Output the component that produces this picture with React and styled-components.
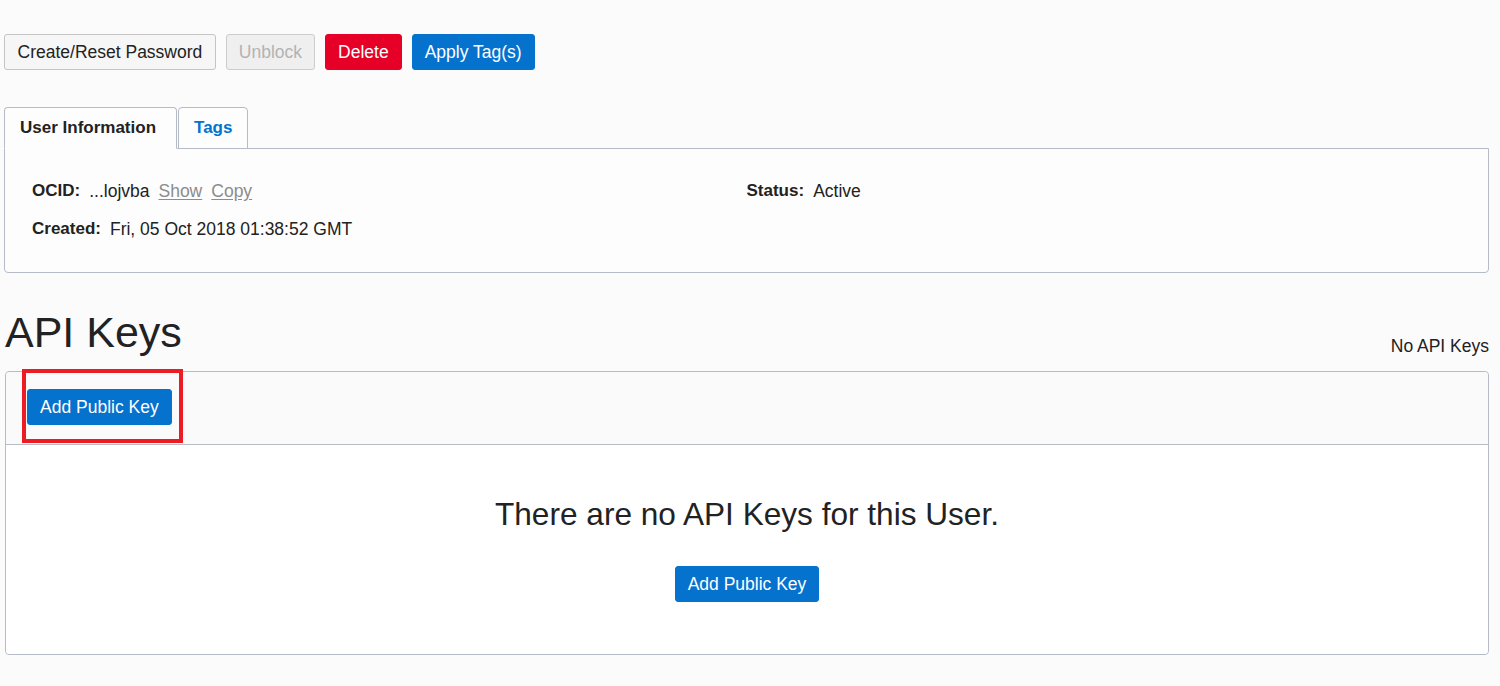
import React from "react";
import styled, { createGlobalStyle } from "styled-components";

const Global = createGlobalStyle`
  html, body { margin: 0; padding: 0; background: #fcfbfc; }
  body { font-family: "Liberation Sans", Arial, sans-serif; color: #222; }
  * { box-sizing: border-box; }
`;

const Page = styled.div`
  padding: 34px 11px 32px 4px;
  min-height: 686px;
`;

const Toolbar = styled.div`
  display: flex;
  gap: 10px;
`;

const variants = {
  default: { bg: "#f6f6f6", fg: "#222", border: "#c4c4c4", pad: "12.5px" },
  disabled: { bg: "#efefef", fg: "#b3b3b3", border: "#cdcdcd", pad: "12px" },
  danger: { bg: "#e60027", fg: "#fff", border: "#e60027", pad: "12px" },
  primary: { bg: "#0572ce", fg: "#fff", border: "#0572ce", pad: "12px" },
};

const Button = styled.button`
  height: 36px;
  padding: 0 ${(p) => variants[p.$variant || "default"].pad};
  font-family: "Liberation Sans", Arial, sans-serif;
  font-size: 17.5px;
  border-radius: 3px;
  border: 1px solid ${(p) => variants[p.$variant || "default"].border};
  background: ${(p) => variants[p.$variant || "default"].bg};
  color: ${(p) => variants[p.$variant || "default"].fg};
  cursor: ${(p) => (p.$variant === "disabled" ? "default" : "pointer")};
  white-space: nowrap;
`;

const Tabs = styled.div`
  display: flex;
  gap: 1px;
  margin-top: 37px;
  position: relative;
  z-index: 1;
`;

const Tab = styled.div`
  height: 42px;
  margin-bottom: -1px;
  padding: ${(p) => (p.$active ? "0 20px 0 15px" : "0 15px")};
  display: flex;
  align-items: center;
  font-size: 17px;
  font-weight: bold;
  color: ${(p) => (p.$active ? "#222" : "#0572ce")};
  background: #fdfdfd;
  border: 1px solid #b6bcc6;
  border-bottom-color: ${(p) => (p.$active ? "#fdfdfd" : "#b6bcc6")};
  border-radius: 4px 4px 0 0;
`;

const InfoPanel = styled.div`
  border: 1px solid #b6bcc6;
  border-radius: 0 0 4px 4px;
  background: #fdfdfd;
  padding: 31px 27px 32px;
  display: grid;
  grid-template-columns: 1fr 1fr;
  row-gap: 16px;
`;

const Field = styled.div`
  display: flex;
  align-items: center;
  gap: 9px;
  font-size: 17.5px;
  line-height: 22px;
  grid-column: ${(p) => p.$col || "auto"};
  grid-row: ${(p) => p.$row || "auto"};
`;

const Label = styled.span`
  font-weight: bold;
  font-size: 17px;
`;

const LinkText = styled.a`
  color: #8c8c8c;
  text-decoration: underline;
  text-underline-offset: 2px;
  cursor: pointer;
`;

const TitleRow = styled.div`
  display: flex;
  justify-content: space-between;
  align-items: flex-end;
  margin-top: 33px;
  padding-left: 1px;
`;

const Heading = styled.h1`
  margin: 0;
  font-size: 43px;
  font-weight: normal;
  line-height: 52px;
  color: #222;
`;

const Count = styled.div`
  font-size: 17.5px;
  line-height: 22px;
  margin-bottom: 1px;
`;

const Card = styled.div`
  margin-top: 13px;
  margin-left: 1px;
  border: 1px solid #b6bcc6;
  border-radius: 4px;
`;

const CardHeader = styled.div`
  background: #fbfafb;
  padding: 17px 21px 19px;
  border-bottom: 1px solid #b6bcc6;
  border-radius: 4px 4px 0 0;
  display: flex;
`;

const Highlight = styled.div`
  position: relative;
  display: inline-flex;
`;

const HighlightBox = styled.div`
  position: absolute;
  top: -20px;
  left: -5px;
  right: -11px;
  bottom: -18px;
  border: 4px solid #ec1c24;
  pointer-events: none;
`;

const CardBody = styled.div`
  background: #fff;
  border-radius: 0 0 4px 4px;
  padding: 51px 20px 52px;
  display: flex;
  flex-direction: column;
  align-items: center;
  gap: 34px;
`;

const EmptyText = styled.div`
  font-size: 31.6px;
  line-height: 36px;
  color: #222;
`;

export default function App() {
  return (
    <>
      <Global />
      <Page>
        <Toolbar>
          <Button>Create/Reset Password</Button>
          <Button $variant="disabled">Unblock</Button>
          <Button $variant="danger">Delete</Button>
          <Button $variant="primary">Apply Tag(s)</Button>
        </Toolbar>

        <Tabs>
          <Tab $active>User Information</Tab>
          <Tab>Tags</Tab>
        </Tabs>
        <InfoPanel>
          <Field $col="1" $row="1">
            <Label>OCID:</Label>
            <span>...lojvba</span>
            <LinkText>Show</LinkText>
            <LinkText>Copy</LinkText>
          </Field>
          <Field $col="2" $row="1">
            <Label>Status:</Label>
            <span>Active</span>
          </Field>
          <Field $col="1" $row="2">
            <Label>Created:</Label>
            <span>Fri, 05 Oct 2018 01:38:52 GMT</span>
          </Field>
        </InfoPanel>

        <TitleRow>
          <Heading>API Keys</Heading>
          <Count>No API Keys</Count>
        </TitleRow>
        <Card>
          <CardHeader>
            <Highlight>
              <Button $variant="primary">Add Public Key</Button>
              <HighlightBox />
            </Highlight>
          </CardHeader>
          <CardBody>
            <EmptyText>There are no API Keys for this User.</EmptyText>
            <Button $variant="primary">Add Public Key</Button>
          </CardBody>
        </Card>
      </Page>
    </>
  );
}
